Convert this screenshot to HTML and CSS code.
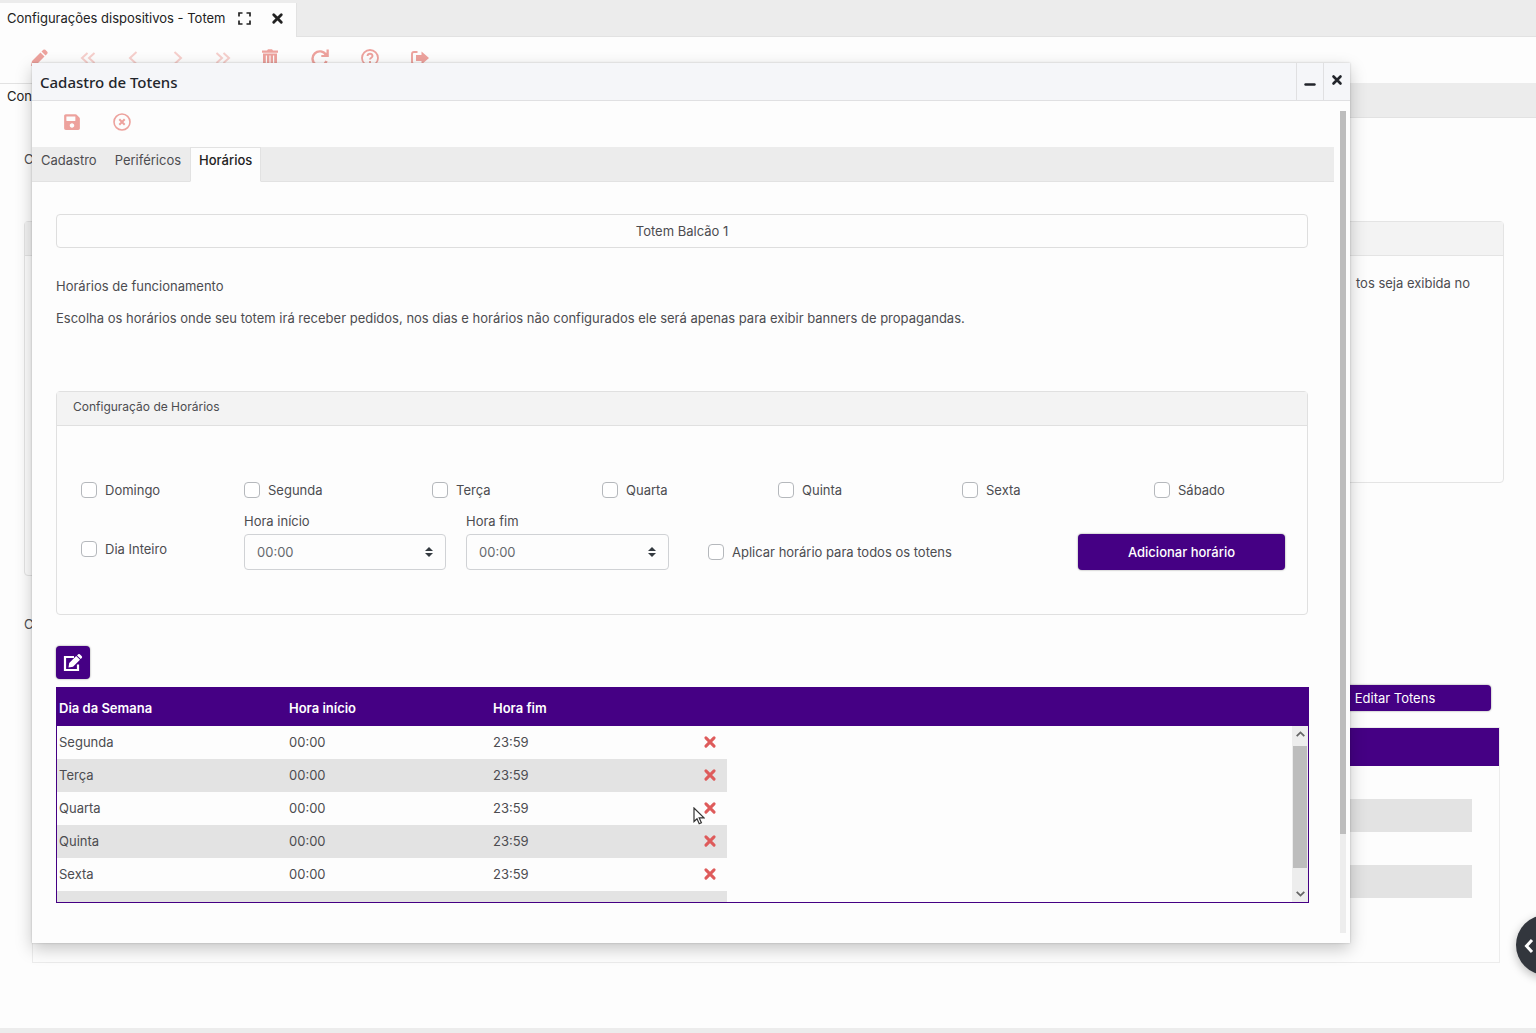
FILE: index.html
```html
<!DOCTYPE html>
<html lang="pt-BR">
<head>
<meta charset="utf-8">
<meta name="viewport" content="width=device-width, initial-scale=1">
<title>Configurações dispositivos - Totem</title>
<link rel="stylesheet" href="styles.css">
</head>
<body>
<svg class="sprite" aria-hidden="true">
  <symbol id="times" viewBox="0 0 12 12"><path d="M2.5 2.5l7 7M9.5 2.5l-7 7" fill="none" stroke="currentColor" stroke-width="2.6" stroke-linecap="round"/></symbol>
</svg>
<div class="page">
  <header class="window-tabs">
    <div class="window-tab">
      <span>Configurações dispositivos - Totem</span>
      <button class="plain" aria-label="Tela cheia"><svg width="13" height="13" viewBox="0 0 13 13"><path d="M1 4.500V1H4.500M8.500 1H12V4.500M12 8.500V12H8.500M4.500 12H1V8.500" fill="none" stroke="currentColor" stroke-width="1.700"/></svg></button>
      <button class="plain close" aria-label="Fechar"><svg width="13" height="13"><use href="#times"/></svg></button>
    </div>
  </header>
  <nav class="toolbar">
    <button class="tool" aria-label="Editar"><svg width="18" height="18" viewBox="0 0 18 18"><path d="M0 17l1-5 8.500-8.500 4 4L5 16zM10.500 2.500L12.300.8q1-.8 2 0l2 2q.8 1 0 2L14.500 6.500z" fill="currentColor"/></svg></button>
    <button class="tool narrow faded" aria-label="Primeiro"><svg width="18" height="18" viewBox="0 0 18 18"><path d="M8.500 4L3 9l5.500 5M15.500 4L10 9l5.500 5" fill="none" stroke="currentColor" stroke-width="2"/></svg></button>
    <button class="tool narrow faded" aria-label="Anterior"><svg width="18" height="18" viewBox="0 0 18 18"><path d="M12.500 3L6 9l6.500 6" fill="none" stroke="currentColor" stroke-width="2"/></svg></button>
    <button class="tool narrow faded" aria-label="Próximo"><svg width="18" height="18" viewBox="0 0 18 18"><path d="M5.500 3L12 9l-6.500 6" fill="none" stroke="currentColor" stroke-width="2"/></svg></button>
    <button class="tool narrow faded" aria-label="Último"><svg width="18" height="18" viewBox="0 0 18 18"><path d="M2.500 4L8 9l-5.500 5M9.500 4L15 9l-5.500 5" fill="none" stroke="currentColor" stroke-width="2"/></svg></button>
    <button class="tool" aria-label="Excluir"><svg width="18" height="18" viewBox="0 0 18 18"><path d="M1 1.500h5L7 .3h4l1 1.200h5v2.200H1zM2 4.500h14v11.500q0 1.500-1.500 1.500h-11q-1.500 0-1.500-1.500zM4.800 6.500v9H6v-9zm3.600 0v9h1.200v-9zm3.600 0v9h1.200v-9z" fill="currentColor" fill-rule="evenodd"/></svg></button>
    <button class="tool" aria-label="Atualizar"><svg width="20" height="18" viewBox="0 0 20 18"><path d="M16 6A7.200 7.200 0 1 0 16.500 12" fill="none" stroke="currentColor" stroke-width="2.400"/><path d="M18.800.5V8h-7.500V6h3l2.200-2.500V.5z" fill="currentColor"/></svg></button>
    <button class="tool" aria-label="Ajuda"><svg width="18" height="18" viewBox="0 0 18 18"><circle cx="9" cy="9" r="8" fill="none" stroke="currentColor" stroke-width="1.800"/><path d="M6.500 7q.2-2.300 2.500-2.300T11.500 7c0 1.800-2.500 1.600-2.500 3.600M9 12v2" fill="none" stroke="currentColor" stroke-width="1.900"/></svg></button>
    <button class="tool" aria-label="Sair"><svg width="18" height="18" viewBox="0 0 18 18"><path d="M6.500 3H3Q1 3 1 5v8q0 2 2 2h3.500" fill="none" stroke="currentColor" stroke-width="1.900"/><path d="M5 6h5.500V2.500L18 9l-7.500 6.500V12H5z" fill="currentColor"/></svg></button>
  </nav>
  <div class="tabs page-tabs"><a class="tab active" href="#config">Con</a></div>
  <main class="page-content">
    <p class="label">C</p>
    <div class="cards">
      <section class="card tall"><div class="card-head"></div></section>
      <section class="card"><div class="card-head"></div><p class="card-note">tos seja exibida no</p></section>
    </div>
    <p class="label">C</p>
    <div class="actions"><button class="primary slim">Editar Totens</button></div>
    <div class="list">
      <div class="list-head"></div>
      <div class="list-row"></div><div class="list-row"></div><div class="list-row"></div><div class="list-row"></div>
    </div>
  </main>
  <footer class="page-foot"></footer>

  <button class="drawer" aria-label="Abrir painel"><svg width="10" height="16" viewBox="0 0 10 16"><path d="M8 2L2.500 8 8 14" fill="none" stroke="currentColor" stroke-width="3"/></svg></button>

  <section class="modal" role="dialog" aria-labelledby="modal-title">
    <header class="modal-head">
      <h1 id="modal-title">Cadastro de Totens</h1>
      <button class="win" aria-label="Minimizar"><svg width="12" height="12" viewBox="0 0 12 12"><path d="M1.500 10.500h9" stroke="currentColor" stroke-width="2.400" stroke-linecap="round"/></svg></button>
      <button class="win" aria-label="Fechar"><svg width="12" height="12"><use href="#times"/></svg></button>
    </header>
    <div class="modal-body">
      <div class="modal-main">
        <div class="modal-tools">
          <button class="tool" aria-label="Salvar"><svg width="16" height="18" viewBox="0 0 448 512"><path fill="currentColor" d="M433.941 129.941l-83.882-83.882A48 48 0 0 0 316.118 32H48C21.490 32 0 53.490 0 80v352c0 26.510 21.490 48 48 48h352c26.510 0 48-21.490 48-48V163.882a48 48 0 0 0-14.059-33.941zM224 416c-35.346 0-64-28.654-64-64 0-35.346 28.654-64 64-64s64 28.654 64 64c0 35.346-28.654 64-64 64zm96-304.520V212c0 6.627-5.373 12-12 12H76c-6.627 0-12-5.373-12-12V108c0-6.627 5.373-12 12-12h228.520c3.183 0 6.235 1.264 8.485 3.515l3.480 3.480A11.996 11.996 0 0 1 320 111.480z"/></svg></button>
          <button class="tool" aria-label="Cancelar"><svg width="18" height="18" viewBox="0 0 18 18"><circle cx="9" cy="9" r="8" fill="none" stroke="currentColor" stroke-width="1.600"/><path d="M6.300 6.300l5.400 5.400M11.700 6.300l-5.400 5.400" stroke="currentColor" stroke-width="2"/></svg></button>
        </div>
        <nav class="tabs">
          <a class="tab" href="#cadastro">Cadastro</a>
          <a class="tab" href="#perifericos">Periféricos</a>
          <a class="tab active" href="#horarios">Horários</a>
        </nav>
        <div class="modal-content">
          <input class="name" type="text" value="Totem Balcão 1" aria-label="Totem" readonly>
          <div class="intro">
            <p>Horários de funcionamento</p>
            <p>Escolha os horários onde seu totem irá receber pedidos, nos dias e horários não configurados ele será apenas para exibir banners de propagandas.</p>
          </div>
          <section class="panel">
            <h2 class="panel-head">Configuração de Horários</h2>
            <form class="panel-body">
              <div class="days">
                <label class="check"><input type="checkbox">Domingo</label>
                <label class="check"><input type="checkbox">Segunda</label>
                <label class="check"><input type="checkbox">Terça</label>
                <label class="check"><input type="checkbox">Quarta</label>
                <label class="check"><input type="checkbox">Quinta</label>
                <label class="check"><input type="checkbox">Sexta</label>
                <label class="check"><input type="checkbox">Sábado</label>
              </div>
              <div class="hours">
                <label class="check all-day"><input type="checkbox">Dia Inteiro</label>
                <div class="field"><label for="start">Hora início</label>
                  <div class="select"><select id="start"><option>00:00</option></select><svg width="8" height="10" viewBox="0 0 8 10"><path d="M4 0l4 4H0zM4 10L0 6h8z" fill="currentColor"/></svg></div></div>
                <div class="field"><label for="end">Hora fim</label>
                  <div class="select"><select id="end"><option>00:00</option></select><svg width="8" height="10" viewBox="0 0 8 10"><path d="M4 0l4 4H0zM4 10L0 6h8z" fill="currentColor"/></svg></div></div>
                <label class="check"><input type="checkbox">Aplicar horário para todos os totens</label>
                <button class="primary" type="button">Adicionar horário</button>
              </div>
            </form>
          </section>
          <button class="primary edit" aria-label="Editar horários"><svg width="20" height="18" viewBox="0 0 20 18"><path d="M11 3H2v13h13v-5.500" fill="none" stroke="currentColor" stroke-width="2.200"/><path d="M5.500 13.500l.7-4.500 7-7 3.800 3.800-7 7zM14 1.500L15.200.3q.8-.6 1.600 0l2 2q.6.800 0 1.600L17.700 5z" fill="currentColor"/></svg></button>
          <div class="grid-box">
            <table>
              <colgroup><col class="c-day"><col class="c-start"><col class="c-end"><col class="c-del"><col></colgroup>
              <thead><tr><th>Dia da Semana</th><th>Hora início</th><th>Hora fim</th><th></th><th></th></tr></thead>
              <tbody>
                <tr><td>Segunda</td><td>00:00</td><td>23:59</td><td><button class="del" aria-label="Remover"><svg width="14" height="14"><use href="#times"/></svg></button></td><td></td></tr>
                <tr><td>Terça</td><td>00:00</td><td>23:59</td><td><button class="del" aria-label="Remover"><svg width="14" height="14"><use href="#times"/></svg></button></td><td></td></tr>
                <tr><td>Quarta</td><td>00:00</td><td>23:59</td><td class="hovered"><button class="del" aria-label="Remover"><svg width="14" height="14"><use href="#times"/></svg></button><svg class="cursor" width="12" height="18" viewBox="0 0 12 18"><path d="M1 1v13.500l3-2.800 2.200 5 2.200-1-2.200-4.800H11z" fill="#fff" stroke="#333" stroke-width="1.200"/></svg></td><td></td></tr>
                <tr><td>Quinta</td><td>00:00</td><td>23:59</td><td><button class="del" aria-label="Remover"><svg width="14" height="14"><use href="#times"/></svg></button></td><td></td></tr>
                <tr><td>Sexta</td><td>00:00</td><td>23:59</td><td><button class="del" aria-label="Remover"><svg width="14" height="14"><use href="#times"/></svg></button></td><td></td></tr>
                <tr><td></td><td></td><td></td><td></td><td></td></tr>
              </tbody>
            </table>
            <div class="scroll">
              <svg width="9" height="6" viewBox="0 0 9 6"><path d="M.7 5.200L4.500 1.400l3.800 3.800" fill="none" stroke="currentColor" stroke-width="1.800"/></svg>
              <span class="thumb"></span>
              <svg width="9" height="6" viewBox="0 0 9 6"><path d="M.7.8l3.800 3.800L8.300.8" fill="none" stroke="currentColor" stroke-width="1.800"/></svg>
            </div>
          </div>
        </div>
      </div>
      <div class="rail"><span class="rail-thumb"></span></div>
    </div>
  </section>
</div>
</body>
</html>
```
FILE: styles.css
```css
* { box-sizing: border-box; }

body {
  margin: 0;
  background: #fdfdfd;
  color: #4c4c50;
  font: 13px/20px Inter, "Liberation Sans", sans-serif;
}

p, h1, h2 { margin: 0; font-weight: 400; }
button, input, select { font: inherit; color: inherit; }
button { padding: 0; border: 0; background: none; }
svg { display: block; }
.sprite { display: none; }

.page {
  position: relative;
  display: flex;
  flex-direction: column;
  min-height: 100vh;
  overflow: hidden;
}

/* Window tabs and toolbar */
.window-tabs {
  height: 37px;
  padding-top: 3px;
  background: #ececec;
  border-bottom: 1px solid #e2e2e2;
}
.window-tab {
  display: flex;
  align-items: center;
  gap: 12px;
  width: 297px;
  height: 34px;
  padding: 0 12px 4px 7px;
  background: #fdfdfd;
  border-right: 1px solid #e2e2e2;
  color: #222;
  white-space: nowrap;
}
.window-tab .close { margin-left: auto; }
.toolbar {
  display: flex;
  align-items: center;
  height: 46px;
  padding: 0 15px 4px;
}
.tool {
  display: flex;
  flex: none;
  justify-content: center;
  width: 50px;
  color: #eda29d;
}
.narrow { width: 45px; }
.faded { color: #f6cfcc; }

.tabs {
  display: flex;
  height: 35px;
  background: #ececec;
  border-bottom: 1px solid #e2e2e2;
}
.tab {
  height: 35px;
  padding: 2px 8px;
  border: 1px solid transparent;
  color: inherit;
  text-decoration: none;
}
.tab.active {
  background: #fdfdfd;
  border-color: #e2e2e2 #e2e2e2 #fdfdfd;
  color: #222;
  font-weight: 500;
}
.page-tabs .tab { width: 120px; padding-left: 7px; border-left: 0; font-weight: 400; }

/* Page behind the dialog */
.page-content { flex: 1; padding: 31px 32px 0 24px; }
.cards {
  display: grid;
  grid-template-columns: 1fr 1fr;
  gap: 24px;
  align-items: start;
  margin: 52px 0 38px;
}
.card {
  height: 262px;
  border: 1px solid #e4e4e4;
  border-radius: 4px;
}
.card.tall { height: 355px; }
.card-head {
  height: 34px;
  background: #f3f3f3;
  border-bottom: 1px solid #e4e4e4;
}
.card-note { padding: 17px 33px 0; text-align: right; }
.label { height: 20px; }
.actions {
  display: flex;
  justify-content: flex-end;
  padding: 51px 13px 16px;
}
.primary {
  height: 36px;
  border-radius: 4px;
  background: #450084;
  box-shadow: 0 0 2px #888;
  color: #fff;
  font-weight: 500;
}
.slim { width: 192px; height: 26px; font-weight: 400; }
.list {
  height: 236px;
  margin: 0 4px 0 8px;
  border: 1px solid #ececec;
}
.list-head { height: 38px; background: #450084; }
.list-row { height: 33px; margin-right: 27px; }
.list-row:nth-child(odd) { background: #e3e3e3; }
.page-foot { height: 5px; background: #ececec; }

.drawer {
  position: absolute;
  top: 915px;
  right: -40px;
  width: 60px;
  height: 60px;
  padding: 2px 0 0 8px;
  border-radius: 50%;
  background: #32363d;
  box-shadow: 0 3px 10px #bbb;
  color: #fff;
}

/* Dialog */
.modal {
  position: absolute;
  top: 63px;
  right: 186px;
  left: 32px;
  background: #fdfdfd;
  box-shadow: 0 6px 16px rgba(0, 0, 0, .22), 0 0 2px rgba(0, 0, 0, .2);
}
.modal-head {
  display: flex;
  height: 38px;
  background: #f5f6f9;
  border-bottom: 1px solid #e0e0e2;
  color: #22252b;
}
.modal-head h1 {
  flex: 1;
  padding: 9px 8px 0;
  font: 500 15px/20px "Noto Sans", sans-serif;
}
.win {
  display: flex;
  align-items: flex-start;
  justify-content: center;
  width: 27px;
  padding-top: 11px;
  border-left: 1px solid #e0e0e2;
}
.modal-body { display: flex; }
.modal-main { flex: 1; min-width: 0; }
.modal-tools { display: flex; height: 46px; padding: 12px 15px; }
.rail {
  width: 6px;
  margin: 10px 4px 10px 6px;
  background: #ededed;
}
.rail-thumb { display: block; height: 88%; background: #bdbdbd; }
.modal-content { padding: 32px 26px 40px 24px; }

.name {
  display: block;
  width: 100%;
  height: 34px;
  border: 1px solid #dedede;
  border-radius: 4px;
  background: #fdfdfd;
  text-align: center;
}
.intro { display: grid; gap: 12px; padding: 28px 0 63px; }

.panel { border: 1px solid #e0e0e0; border-radius: 4px; }
.panel-head {
  height: 34px;
  padding: 5px 16px;
  background: #f3f3f3;
  border-bottom: 1px solid #e0e0e0;
  font-size: 12px;
}
.panel-body { padding: 54px 22px 44px 24px; }
.days {
  display: grid;
  grid-template-columns: 163fr 188fr 170fr 176fr 184fr 192fr 131fr;
}
.check { display: flex; align-items: center; gap: 8px; white-space: nowrap; }
.check input {
  width: 16px;
  height: 16px;
  margin: 0;
  border: 1px solid #b5b8bc;
  border-radius: 4px;
  background: #fff;
  appearance: none;
}
.hours {
  display: grid;
  grid-template-columns: 143fr 202fr 222fr 350fr 207fr;
  column-gap: 20px;
  align-items: end;
  margin-top: 11px;
}
.hours > .check { height: 36px; }
.hours > .all-day { height: 42px; }
.field { max-width: 203px; }
.field label { display: block; height: 23px; }
.select { position: relative; }
.select select {
  display: block;
  width: 100%;
  height: 36px;
  padding: 0 12px;
  border: 1px solid #d0d2d5;
  border-radius: 4px;
  background: #fdfdfd;
  color: #66696e;
  appearance: none;
}
.select svg { position: absolute; top: 13px; right: 13px; color: #343a40; }

.edit {
  display: flex;
  align-items: center;
  justify-content: center;
  width: 34px;
  height: 33px;
  margin: 31px 0 8px;
}

/* Schedule table */
.grid-box {
  position: relative;
  height: 216px;
  margin-right: -1px;
  overflow: hidden;
  border: 1px solid #450084;
}
table { width: 100%; border-collapse: collapse; table-layout: fixed; }
.c-day { width: 230px; }
.c-start { width: 204px; }
.c-end { width: 202px; }
.c-del { width: 34px; }
th {
  height: 38px;
  padding: 2px 2px 0;
  background: #450084;
  color: #fff;
  font-weight: 600;
  text-align: left;
}
td { height: 33px; padding: 0 2px 1px; }
tr:nth-child(even) td:not(:last-child) { background: #e3e3e3; }
.del { display: block; margin: 0 auto; color: #de5b5b; }
.hovered { position: relative; }
.cursor { position: absolute; top: 15px; left: 0; }
.scroll {
  position: absolute;
  top: 38px;
  right: 0;
  bottom: 0;
  display: flex;
  flex-direction: column;
  align-items: center;
  justify-content: space-between;
  width: 16px;
  padding: 5px 1px;
  background: #ededed;
  color: #666;
}
.thumb { width: 14px; height: 122px; margin-bottom: 14px; background: #bdbdbd; }
```
